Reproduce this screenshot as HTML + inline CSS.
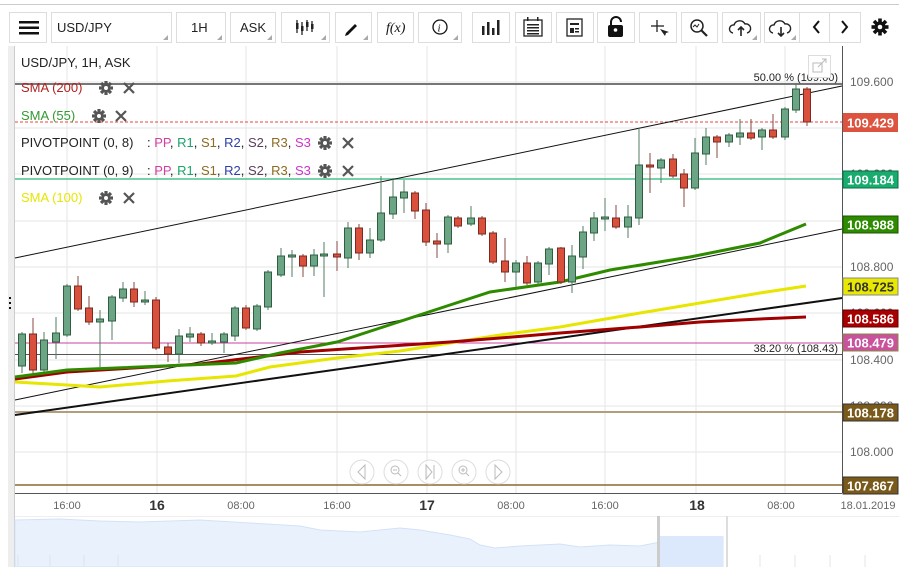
<!DOCTYPE html>
<html><head><meta charset="utf-8"><style>
html,body{margin:0;padding:0;background:#fff;width:899px;height:567px;overflow:hidden;font-family:"Liberation Sans",sans-serif}
svg{display:block}
.g line{stroke:#4f7d60;stroke-width:1}
.g rect{fill:#6ba585;stroke:#2f5e40;stroke-width:1}
.r line{stroke:#8a4a42;stroke-width:1}
.r rect{fill:#d9503c;stroke:#7a2a1f;stroke-width:1}
.btn{fill:#fff;stroke:#ddd;stroke-width:1}
.ax{font-size:12px;fill:#666}
.tag{font-size:13px;font-weight:bold;fill:#fff}
.lg{font-size:13px}
</style></head><body>
<svg width="899" height="567" viewBox="0 0 899 567" xmlns="http://www.w3.org/2000/svg">
<line x1="0" y1="4.5" x2="899" y2="4.5" stroke="#ccc"/>
<!-- toolbar -->
<g>
<rect class="btn" x="9.5" y="12.5" width="37" height="30"/>
<rect class="btn" x="51.5" y="12.5" width="120" height="30"/>
<rect class="btn" x="176.5" y="12.5" width="49" height="30"/>
<rect class="btn" x="230.5" y="12.5" width="45" height="30"/>
<rect class="btn" x="281.5" y="12.5" width="48" height="30"/>
<rect class="btn" x="335.5" y="12.5" width="36" height="30"/>
<rect class="btn" x="377.5" y="12.5" width="36" height="30"/>
<rect class="btn" x="418.5" y="12.5" width="43" height="30"/>
<rect class="btn" x="472.5" y="12.5" width="37" height="30"/>
<rect class="btn" x="515.5" y="12.5" width="36" height="30"/>
<rect class="btn" x="556.5" y="12.5" width="37" height="30"/>
<rect class="btn" x="597.5" y="12.5" width="37" height="30"/>
<rect class="btn" x="639.5" y="12.5" width="37" height="30"/>
<rect class="btn" x="681.5" y="12.5" width="36" height="30"/>
<rect class="btn" x="722.5" y="12.5" width="38" height="30"/>
<rect class="btn" x="764.5" y="12.5" width="35" height="30"/>
<rect class="btn" x="799.5" y="12.5" width="30" height="30"/>
<rect class="btn" x="829.5" y="12.5" width="31" height="30"/>
<!-- hamburger -->
<rect x="19" y="21" width="20" height="2.5" fill="#111"/><rect x="19" y="26.5" width="20" height="2.5" fill="#111"/><rect x="19" y="32" width="20" height="2.5" fill="#111"/>
<text x="57" y="32" font-size="13" fill="#222">USD/JPY</text>
<text x="191" y="32" font-size="13" fill="#222">1H</text>
<text x="240" y="32" font-size="13" fill="#222">ASK</text>
<g fill="#aaa"><path d="M168 40l-5 0 5-5z"/><path d="M222 40l-5 0 5-5z"/><path d="M272 40l-5 0 5-5z"/><path d="M326 40l-5 0 5-5z"/><path d="M368 40l-5 0 5-5z"/><path d="M757 40l-5 0 5-5z"/><path d="M796 40l-5 0 5-5z"/><path d="M458 40l-5 0 5-5z"/></g>
<!-- candles icon -->
<g stroke="#222" stroke-width="1.3"><line x1="297" y1="20" x2="297" y2="33"/><line x1="302" y1="22" x2="302" y2="35"/><line x1="307" y1="20" x2="307" y2="31"/><line x1="312" y1="21" x2="312" y2="32"/></g>
<g fill="#222"><rect x="296" y="23" width="2.5" height="6"/><rect x="301" y="26" width="2.5" height="5"/><rect x="306" y="22" width="2.5" height="5"/><rect x="311" y="24" width="2.5" height="5"/></g>
<path d="M346 33l9-9 2 2-9 9-3 1z" fill="#111"/>
<text x="386" y="32" font-size="14" font-style="italic" font-family="Liberation Serif,serif" fill="#111">f(x)</text>
<circle cx="440" cy="27" r="7" fill="none" stroke="#111" stroke-width="1.3"/><text x="437.5" y="31.5" font-size="11" font-style="italic" font-family="Liberation Serif,serif" fill="#111">i</text>
<g fill="#222"><rect x="482" y="26" width="2.5" height="9"/><rect x="487" y="22" width="2.5" height="13"/><rect x="492" y="28" width="2.5" height="7"/><rect x="497" y="20" width="2.5" height="15"/></g>
<rect x="524" y="20" width="18" height="16" fill="none" stroke="#222" stroke-width="1.3"/><g fill="#222"><rect x="527" y="24" width="12" height="1.5"/><rect x="527" y="27" width="12" height="1.5"/><rect x="527" y="30" width="12" height="1.5"/><rect x="527" y="33" width="12" height="1.5"/><rect x="527" y="17" width="1.5" height="4"/><rect x="537" y="17" width="1.5" height="4"/></g>
<rect x="567" y="19" width="15" height="17" fill="none" stroke="#222" stroke-width="1.3"/><rect x="570" y="23" width="9" height="2" fill="#222"/><rect x="570" y="28" width="4" height="5" fill="#222"/><rect x="575" y="28" width="4" height="1.5" fill="#222"/><rect x="575" y="31" width="4" height="1.5" fill="#222"/>
<path d="M611 25v-3a5 5 0 0 1 10 0" fill="none" stroke="#111" stroke-width="2"/><rect x="608" y="25" width="15" height="12" rx="2" fill="#111"/><circle cx="615.5" cy="30" r="1.8" fill="#fff"/>
<g stroke="#222" stroke-width="1.3"><line x1="651" y1="26" x2="664" y2="26"/><line x1="657" y1="20" x2="657" y2="32"/></g><path d="M660 29l5 7 1-3 3-1z" fill="#222"/>
<circle cx="697" cy="26" r="6" fill="none" stroke="#222" stroke-width="1.5"/><line x1="701" y1="30" x2="707" y2="36" stroke="#222" stroke-width="2.2"/><path d="M693 27l2-2 2 2 2-3" fill="none" stroke="#222"/>
<path d="M733 33a4 4 0 0 1 1-8a6 6 0 0 1 11-1a4.5 4.5 0 0 1 2 9" fill="none" stroke="#222" stroke-width="1.4"/><path d="M741 36v-9m-3 3l3-3 3 3" fill="none" stroke="#222" stroke-width="1.6"/>
<path d="M773 33a4 4 0 0 1 1-8a6 6 0 0 1 11-1a4.5 4.5 0 0 1 2 9" fill="none" stroke="#222" stroke-width="1.4"/><path d="M781 27v9m-3-3l3 3 3-3" fill="none" stroke="#222" stroke-width="1.6"/>
<path d="M819 21l-5 6 5 6" fill="none" stroke="#111" stroke-width="2"/>
<path d="M842 21l5 6-5 6" fill="none" stroke="#111" stroke-width="2"/>
<g transform="translate(880 27)"><circle r="5.5" fill="#111"/><g fill="#111"><rect x="-1.8" y="-8.5" width="3.6" height="17"/><rect x="-1.8" y="-8.5" width="3.6" height="17" transform="rotate(45)"/><rect x="-1.8" y="-8.5" width="3.6" height="17" transform="rotate(90)"/><rect x="-1.8" y="-8.5" width="3.6" height="17" transform="rotate(135)"/></g><circle r="2.3" fill="#fff"/></g>
</g>
<!-- chart frame -->
<rect x="8" y="46" width="6" height="521" fill="#eee"/>
<line x1="14.5" y1="46" x2="14.5" y2="567" stroke="#ccc"/>
<g fill="#111"><rect x="9" y="297" width="2" height="2"/><rect x="9" y="302" width="2" height="2"/><rect x="9" y="307" width="2" height="2"/></g>
<!-- grid -->
<g stroke="#e6e6e6" stroke-width="1">
<line x1="67" y1="46" x2="67" y2="493"/><line x1="157" y1="46" x2="157" y2="493"/><line x1="246" y1="46" x2="246" y2="493"/><line x1="337" y1="46" x2="337" y2="493"/><line x1="427" y1="46" x2="427" y2="493"/><line x1="516" y1="46" x2="516" y2="493"/><line x1="605" y1="46" x2="605" y2="493"/><line x1="696" y1="46" x2="696" y2="493"/><line x1="785" y1="46" x2="785" y2="493"/>
<line x1="15" y1="82" x2="842" y2="82"/><line x1="15" y1="128" x2="842" y2="128"/><line x1="15" y1="174" x2="842" y2="174"/><line x1="15" y1="221" x2="842" y2="221"/><line x1="15" y1="267" x2="842" y2="267"/><line x1="15" y1="313" x2="842" y2="313"/><line x1="15" y1="360" x2="842" y2="360"/><line x1="15" y1="406" x2="842" y2="406"/><line x1="15" y1="452" x2="842" y2="452"/>
</g>
<line x1="842.5" y1="46" x2="842.5" y2="493" stroke="#555"/>
<line x1="15" y1="493.5" x2="842" y2="493.5" stroke="#555"/>
<!-- y axis labels -->
<g class="ax"><text x="850" y="86">109.600</text><text x="850" y="178">109.200</text><text x="850" y="225">109.000</text><text x="850" y="271">108.800</text><text x="850" y="317">108.600</text><text x="850" y="364">108.400</text><text x="850" y="410">108.200</text><text x="850" y="456">108.000</text></g>
<!-- horizontal levels -->
<line x1="15" y1="84" x2="842" y2="84" stroke="#777" stroke-width="2"/>
<line x1="15" y1="122" x2="842" y2="122" stroke="#e8453c" stroke-dasharray="3,2"/>
<line x1="15" y1="179" x2="842" y2="179" stroke="#4cc38a" stroke-width="1.5"/>
<line x1="15" y1="343" x2="842" y2="343" stroke="#c4449a"/>
<line x1="15" y1="354.5" x2="842" y2="354.5" stroke="#555"/>
<line x1="15" y1="412" x2="842" y2="412" stroke="#b29e7f" stroke-width="2"/>
<line x1="15" y1="485" x2="842" y2="485" stroke="#8b6a2e" stroke-width="1.5"/>
<text x="838" y="81" text-anchor="end" font-size="11" fill="#222">50.00 % (109.60)</text>
<text x="838" y="352" text-anchor="end" font-size="11" fill="#222">38.20 % (108.43)</text>
<!-- trend lines -->
<line x1="15" y1="258" x2="842" y2="86" stroke="#111" stroke-width="1"/>
<line x1="15" y1="400" x2="842" y2="229" stroke="#111" stroke-width="1"/>
<line x1="15" y1="415" x2="842" y2="298" stroke="#111" stroke-width="2"/>
<!-- SMAs -->
<polyline fill="none" stroke="#e6e600" stroke-width="3" points="15,382 67,385 100,387 167,381 236,376 270,367 337,358 400,351 450,343 500,335 560,327 640,313 700,303 760,293 806,286"/>
<polyline fill="none" stroke="#a00000" stroke-width="3" points="15,379 67,372 200,364 300,352 450,342 500,338 560,333 640,327 700,322 760,319 806,317"/>
<polyline fill="none" stroke="#2e8b00" stroke-width="3" points="15,377 67,370 236,363 280,353 337,342 380,328 450,305 490,292 560,282 610,270 690,257 760,243 806,224"/>
<!-- candles green -->
<g class="g">
<line x1="22" y1="332" x2="22" y2="373"/><rect x="18.5" y="334" width="7" height="32"/>
<line x1="44" y1="332" x2="44" y2="372"/><rect x="40.5" y="340" width="7" height="30"/>
<line x1="56" y1="317" x2="56" y2="359"/><rect x="52.5" y="333" width="7" height="9"/>
<line x1="67" y1="284" x2="67" y2="337"/><rect x="63.5" y="286" width="7" height="49"/>
<line x1="100" y1="310" x2="100" y2="367"/><rect x="96.5" y="319" width="7" height="3"/>
<line x1="112" y1="295" x2="112" y2="340"/><rect x="108.5" y="297" width="7" height="24"/>
<line x1="123" y1="282" x2="123" y2="302"/><rect x="119.5" y="289" width="7" height="9"/>
<line x1="145" y1="291" x2="145" y2="305"/><rect x="141.5" y="300" width="7" height="2"/>
<line x1="179" y1="329" x2="179" y2="363"/><rect x="175.5" y="336" width="7" height="18"/>
<line x1="190" y1="327" x2="190" y2="342"/><rect x="186.5" y="334" width="7" height="3"/>
<line x1="212" y1="333" x2="212" y2="345"/><rect x="208.5" y="341" width="7" height="2"/>
<line x1="224" y1="332" x2="224" y2="353"/><rect x="220.5" y="334" width="7" height="8"/>
<line x1="235" y1="306" x2="235" y2="341"/><rect x="231.5" y="308" width="7" height="28"/>
<line x1="257" y1="304" x2="257" y2="331"/><rect x="253.5" y="306" width="7" height="23"/>
<line x1="268" y1="270" x2="268" y2="310"/><rect x="264.5" y="272" width="7" height="35"/>
<line x1="281" y1="248" x2="281" y2="277"/><rect x="277.5" y="256" width="7" height="19"/>
<line x1="292" y1="250" x2="292" y2="277"/><rect x="288.5" y="255" width="7" height="2"/>
<line x1="314" y1="249" x2="314" y2="276"/><rect x="310.5" y="255" width="7" height="11"/>
<line x1="324" y1="242" x2="324" y2="297"/><rect x="320.5" y="254" width="7" height="2"/>
<line x1="348" y1="222" x2="348" y2="268"/><rect x="344.5" y="228" width="7" height="30"/>
<line x1="370" y1="228" x2="370" y2="258"/><rect x="366.5" y="240" width="7" height="13"/>
<line x1="381" y1="176" x2="381" y2="242"/><rect x="377.5" y="213" width="7" height="27"/>
<line x1="393" y1="178" x2="393" y2="219"/><rect x="389.5" y="197" width="7" height="17"/>
<line x1="404" y1="180" x2="404" y2="213"/><rect x="400.5" y="192" width="7" height="6"/>
<line x1="448" y1="215" x2="448" y2="253"/><rect x="444.5" y="217" width="7" height="27"/>
<line x1="471" y1="206" x2="471" y2="226"/><rect x="467.5" y="218" width="7" height="6"/>
<line x1="516" y1="260" x2="516" y2="287"/><rect x="512.5" y="263" width="7" height="9"/>
<line x1="538" y1="261" x2="538" y2="284"/><rect x="534.5" y="263" width="7" height="19"/>
<line x1="549" y1="247" x2="549" y2="275"/><rect x="545.5" y="249" width="7" height="15"/>
<line x1="572" y1="245" x2="572" y2="293"/><rect x="568.5" y="256" width="7" height="26"/>
<line x1="583" y1="226" x2="583" y2="269"/><rect x="579.5" y="232" width="7" height="25"/>
<line x1="594" y1="212" x2="594" y2="241"/><rect x="590.5" y="218" width="7" height="15"/>
<line x1="605" y1="198" x2="605" y2="231"/><rect x="601.5" y="217" width="7" height="2"/>
<line x1="628" y1="205" x2="628" y2="238"/><rect x="624.5" y="217" width="7" height="10"/>
<line x1="639" y1="128" x2="639" y2="225"/><rect x="635.5" y="165" width="7" height="53"/>
<line x1="661" y1="158" x2="661" y2="183"/><rect x="657.5" y="160" width="7" height="8"/>
<line x1="695" y1="138" x2="695" y2="190"/><rect x="691.5" y="153" width="7" height="35"/>
<line x1="706" y1="128" x2="706" y2="165"/><rect x="702.5" y="137" width="7" height="17"/>
<line x1="729" y1="133" x2="729" y2="147"/><rect x="725.5" y="135" width="7" height="7"/>
<line x1="740" y1="119" x2="740" y2="145"/><rect x="736.5" y="133" width="7" height="4"/>
<line x1="762" y1="128" x2="762" y2="150"/><rect x="758.5" y="130" width="7" height="7"/>
<line x1="785" y1="107" x2="785" y2="140"/><rect x="781.5" y="109" width="7" height="28"/>
<line x1="796" y1="83" x2="796" y2="113"/><rect x="792.5" y="89" width="7" height="21"/>
</g>
<g class="r">
<line x1="33" y1="318" x2="33" y2="373"/><rect x="29.5" y="334" width="7" height="36"/>
<line x1="78" y1="276" x2="78" y2="311"/><rect x="74.5" y="286" width="7" height="23"/>
<line x1="89" y1="296" x2="89" y2="325"/><rect x="85.5" y="308" width="7" height="14"/>
<line x1="134" y1="282" x2="134" y2="307"/><rect x="130.5" y="289" width="7" height="13"/>
<line x1="156" y1="297" x2="156" y2="350"/><rect x="152.5" y="300" width="7" height="48"/>
<line x1="168" y1="343" x2="168" y2="362"/><rect x="164.5" y="347" width="7" height="7"/>
<line x1="201" y1="332" x2="201" y2="346"/><rect x="197.5" y="334" width="7" height="9"/>
<line x1="246" y1="305" x2="246" y2="330"/><rect x="242.5" y="308" width="7" height="20"/>
<line x1="303" y1="254" x2="303" y2="277"/><rect x="299.5" y="256" width="7" height="10"/>
<line x1="337" y1="241" x2="337" y2="271"/><rect x="333.5" y="254" width="7" height="3"/>
<line x1="359" y1="224" x2="359" y2="260"/><rect x="355.5" y="228" width="7" height="25"/>
<line x1="415" y1="191" x2="415" y2="219"/><rect x="411.5" y="193" width="7" height="18"/>
<line x1="426" y1="203" x2="426" y2="246"/><rect x="422.5" y="210" width="7" height="32"/>
<line x1="437" y1="233" x2="437" y2="258"/><rect x="433.5" y="241" width="7" height="3"/>
<line x1="458" y1="216" x2="458" y2="228"/><rect x="454.5" y="218" width="7" height="8"/>
<line x1="482" y1="216" x2="482" y2="236"/><rect x="478.5" y="218" width="7" height="16"/>
<line x1="493" y1="231" x2="493" y2="264"/><rect x="489.5" y="233" width="7" height="29"/>
<line x1="505" y1="238" x2="505" y2="282"/><rect x="501.5" y="261" width="7" height="11"/>
<line x1="527" y1="256" x2="527" y2="285"/><rect x="523.5" y="263" width="7" height="20"/>
<line x1="561" y1="247" x2="561" y2="284"/><rect x="557.5" y="248" width="7" height="34"/>
<line x1="616" y1="205" x2="616" y2="229"/><rect x="612.5" y="218" width="7" height="9"/>
<line x1="650" y1="153" x2="650" y2="193"/><rect x="646.5" y="165" width="7" height="2"/>
<line x1="673" y1="154" x2="673" y2="178"/><rect x="669.5" y="159" width="7" height="17"/>
<line x1="684" y1="169" x2="684" y2="207"/><rect x="680.5" y="174" width="7" height="14"/>
<line x1="717" y1="135" x2="717" y2="158"/><rect x="713.5" y="137" width="7" height="5"/>
<line x1="751" y1="119" x2="751" y2="140"/><rect x="747.5" y="133" width="7" height="5"/>
<line x1="773" y1="114" x2="773" y2="139"/><rect x="769.5" y="130" width="7" height="7"/>
<line x1="807" y1="87" x2="807" y2="126"/><rect x="803.5" y="89" width="7" height="33"/>
</g>
<!-- price tags -->
<rect x="843" y="113" width="55" height="19" fill="#dc5440"/><text class="tag" x="847" y="127.5">109.429</text>
<rect x="843" y="171" width="55" height="17" fill="#18ad6e" stroke="#0d6b43"/><text class="tag" x="847" y="184.5">109.184</text>
<rect x="843" y="216" width="55" height="17" fill="#2d8b00" stroke="#1b5500"/><text class="tag" x="847" y="229.5">108.988</text>
<rect x="843" y="278" width="55" height="17" fill="#e8e800" stroke="#888"/><text class="tag" x="847" y="291.5" fill="#333" style="fill:#333">108.725</text>
<rect x="843" y="310" width="55" height="17" fill="#a80000" stroke="#600"/><text class="tag" x="847" y="323.5">108.586</text>
<rect x="843" y="334" width="55" height="17" fill="#c9529d" stroke="#884"/><text class="tag" x="847" y="347.5">108.479</text>
<rect x="843" y="404" width="55" height="17" fill="#7a5a1a" stroke="#333"/><text class="tag" x="847" y="417.5">108.178</text>
<rect x="843" y="477" width="55" height="17" fill="#7a5a1a" stroke="#333"/><text class="tag" x="847" y="490.5">107.867</text>
<!-- expand icon -->
<rect x="808.5" y="55.5" width="22" height="22" fill="#fff" stroke="#ddd"/><rect x="813" y="63" width="9" height="9" fill="none" stroke="#bbb"/><path d="M818 67l8-8m-4 0h4v4" fill="none" stroke="#bbb"/>
<!-- legend -->
<g class="lg">
<text x="21" y="67" fill="#222">USD/JPY, 1H, ASK</text>
<text x="21" y="92" fill="#b22222">SMA (200)</text>
<text x="21" y="120" fill="#339933">SMA (55)</text>
<text x="21" y="147" fill="#222">PIVOTPOINT (0, 8)</text>
<text x="21" y="175" fill="#222">PIVOTPOINT (0, 9)</text>
<text x="147" y="147"><tspan fill="#222">: </tspan><tspan fill="#d63fa0">PP</tspan><tspan fill="#222">, </tspan><tspan fill="#1aa36a">R1</tspan><tspan fill="#222">, </tspan><tspan fill="#8c6a1f">S1</tspan><tspan fill="#222">, </tspan><tspan fill="#2d3fa8">R2</tspan><tspan fill="#222">, </tspan><tspan fill="#5a3d5a">S2</tspan><tspan fill="#222">, </tspan><tspan fill="#8c6a1f">R3</tspan><tspan fill="#222">, </tspan><tspan fill="#cc33cc">S3</tspan></text>
<text x="147" y="175"><tspan fill="#222">: </tspan><tspan fill="#d63fa0">PP</tspan><tspan fill="#222">, </tspan><tspan fill="#1aa36a">R1</tspan><tspan fill="#222">, </tspan><tspan fill="#8c6a1f">S1</tspan><tspan fill="#222">, </tspan><tspan fill="#2d3fa8">R2</tspan><tspan fill="#222">, </tspan><tspan fill="#5a3d5a">S2</tspan><tspan fill="#222">, </tspan><tspan fill="#8c6a1f">R3</tspan><tspan fill="#222">, </tspan><tspan fill="#cc33cc">S3</tspan></text>
<text x="21" y="202" fill="#e6e600">SMA (100)</text>
</g>
<!-- gear and x icons -->
<defs><g id="gear"><circle r="4.5" fill="#555"/><g fill="#555"><rect x="-1.6" y="-7" width="3.2" height="14"/><rect x="-1.6" y="-7" width="3.2" height="14" transform="rotate(45)"/><rect x="-1.6" y="-7" width="3.2" height="14" transform="rotate(90)"/><rect x="-1.6" y="-7" width="3.2" height="14" transform="rotate(135)"/></g><circle r="2" fill="#fff"/></g>
<path id="xx" d="M-5-5L5 5M5-5L-5 5" stroke="#555" stroke-width="2.2"/></defs>
<use href="#gear" x="106" y="88"/><use href="#xx" x="129" y="88"/>
<use href="#gear" x="99" y="116"/><use href="#xx" x="121" y="116"/>
<use href="#gear" x="325" y="143"/><use href="#xx" x="348" y="143"/>
<use href="#gear" x="325" y="171"/><use href="#xx" x="348" y="171"/>
<use href="#gear" x="106" y="198"/><use href="#xx" x="129" y="198"/>
<!-- nav buttons -->
<g fill="#fff" fill-opacity="0.6" stroke="#ddd"><circle cx="362" cy="472" r="12"/><circle cx="396" cy="472" r="12"/><circle cx="430" cy="472" r="12"/><circle cx="464" cy="472" r="12"/><circle cx="498" cy="472" r="12"/></g>
<g fill="none" stroke="#bbb"><path d="M365 465l-7 7 7 7z"/><circle cx="395" cy="470" r="4"/><path d="M398 473l3 3M393 470h4"/><path d="M426 465l6 7-6 7zM434 465v14"/><circle cx="463" cy="470" r="4"/><path d="M466 473l3 3M461 470h4M463 468v4"/><path d="M495 465l7 7-7 7z"/></g>
<!-- time axis -->
<g class="ax" font-size="11" style="font-size:11px"><text x="67" y="509" text-anchor="middle">16:00</text><text x="241" y="509" text-anchor="middle">08:00</text><text x="337" y="509" text-anchor="middle">16:00</text><text x="511" y="509" text-anchor="middle">08:00</text><text x="605" y="509" text-anchor="middle">16:00</text><text x="781" y="509" text-anchor="middle">08:00</text><text x="868" y="509" text-anchor="middle">18.01.2019</text></g>
<g font-size="14" font-weight="bold" fill="#333"><text x="157" y="510" text-anchor="middle">16</text><text x="427" y="510" text-anchor="middle">17</text><text x="697" y="510" text-anchor="middle">18</text></g>
<!-- navigator -->
<line x1="15" y1="516.5" x2="899" y2="516.5" stroke="#eee"/>
<path d="M15 520 L60 519 L100 521 L140 522 L200 520 L250 523 L300 526 L320 530 L360 532 L400 528 L420 530 L450 535 L470 539 L480 545 L495 548 L520 546 L560 544 L580 547 L610 545 L640 546 L660 542 L700 540 L723 537 L723 567 L15 567Z" fill="#e9f1fd" stroke="#d3e2f8"/>
<rect x="660" y="536" width="63" height="31" fill="#dce8fb"/>
<rect x="657" y="516" width="3" height="51" fill="#ccc"/>
<rect x="726" y="516" width="2" height="51" fill="#ddd"/>
<g stroke="#e4e4e4"><line x1="18" y1="555" x2="18" y2="567"/><line x1="50" y1="555" x2="50" y2="567"/><line x1="84" y1="555" x2="84" y2="567"/><line x1="118" y1="555" x2="118" y2="567"/><line x1="760" y1="555" x2="760" y2="567"/><line x1="795" y1="555" x2="795" y2="567"/><line x1="830" y1="555" x2="830" y2="567"/><line x1="865" y1="555" x2="865" y2="567"/></g>
</svg>
</body></html>
